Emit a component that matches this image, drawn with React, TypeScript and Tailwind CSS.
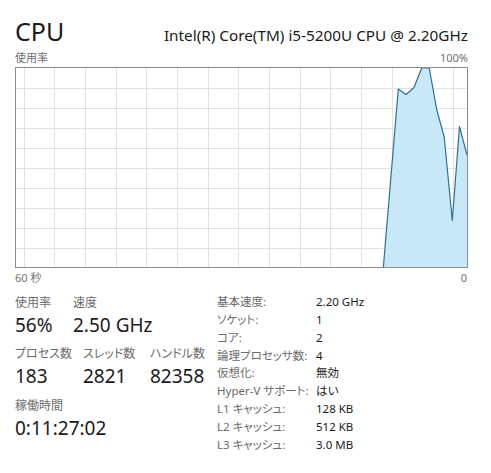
import React from "react";

const FONT = { fontFamily: '"Noto Sans", "Noto Sans CJK JP", sans-serif' };

const pts: [number, number][] = [
  [367.3, 200],
  [382.3, 21],
  [390, 26.5],
  [398, 19.5],
  [405.7, 0],
  [413.2, 0],
  [420.7, 41.5],
  [428.2, 69],
  [436.3, 152.5],
  [443.5, 58.7],
  [451, 87],
];

function Chart() {
  const hLines = [20, 40, 60, 80, 100, 120, 140, 160, 180];
  const vLines = Array.from({ length: 15 }, (_, k) => 7.5 + 30.67 * k);
  const line = pts.map((p) => p.join(",")).join(" ");
  const fill = line + " 451,200";
  return (
    <div className="w-[453px] h-[201px] border border-[#8c8c8c] bg-white">
      <svg width="451" height="199" viewBox="0 0 451 199" className="block">
        {hLines.map((y) => (
          <line key={"h" + y} x1="0" x2="451" y1={y + 0.5} y2={y + 0.5} stroke="#e2e2e2" strokeWidth="1" />
        ))}
        {vLines.map((x) => (
          <line key={"v" + x} y1="0" y2="199" x1={Math.round(x) + 0.5} x2={Math.round(x) + 0.5} stroke="#e2e2e2" strokeWidth="1" />
        ))}
        <polygon points={fill} fill="#c3e6f6" fillOpacity="0.9" />
        <polyline points={line} fill="none" stroke="#2b7195" strokeWidth="1.2" strokeLinejoin="round" />
      </svg>
    </div>
  );
}

function Stat({ label, value, w }: { label: string; value: string; w: string }) {
  return (
    <div className={"flex flex-col whitespace-nowrap " + w}>
      <div className="text-[12px] leading-[16px] text-[#6b6b6b] [font-feature-settings:'palt']">{label}</div>
      <div className="text-[19px] leading-[24px] text-[#1a1a1a] mt-[2px]">{value}</div>
    </div>
  );
}

const details: [string, string][] = [
  ["基本速度:", "2.20 GHz"],
  ["ソケット:", "1"],
  ["コア:", "2"],
  ["論理プロセッサ数:", "4"],
  ["仮想化:", "無効"],
  ["Hyper-V サポート:", "はい"],
  ["L1 キャッシュ:", "128 KB"],
  ["L2 キャッシュ:", "512 KB"],
  ["L3 キャッシュ:", "3.0 MB"],
];

export default function App() {
  return (
    <div className="w-[491px] h-[473px] bg-white overflow-hidden" style={FONT}>
      <div className="pl-[15px] pr-[23px] pt-[12px]">
        <div className="flex items-end justify-between h-[36px]">
          <div className="text-[25px] leading-[32px] text-[#1a1a1a] mb-[1px]">CPU</div>
          <div className="text-[15.3px] leading-[22px] text-[#1a1a1a] mb-[2px]">Intel(R) Core(TM) i5-5200U CPU @ 2.20GHz</div>
        </div>
        <div className="flex justify-between text-[11px] leading-[14px] text-[#707070] mt-[3px] h-[16px]">
          <span>使用率</span>
          <span>100%</span>
        </div>
        <Chart />
        <div className="flex justify-between text-[11px] leading-[14px] text-[#707070] mt-[3px]">
          <span>60 秒</span>
          <span className="mr-[1px]">0</span>
        </div>
        <div className="flex mt-[10px]">
          <div className="w-[202px] flex flex-col">
            <div className="flex">
              <Stat label="使用率" value="56%" w="w-[58px]" />
              <Stat label="速度" value="2.50 GHz" w="w-[90px]" />
            </div>
            <div className="flex mt-[9px]">
              <Stat label="プロセス数" value="183" w="w-[68px]" />
              <Stat label="スレッド数" value="2821" w="w-[67px]" />
              <Stat label="ハンドル数" value="82358" w="w-[67px]" />
            </div>
            <div className="flex mt-[10px]">
              <Stat label="稼働時間" value="0:11:27:02" w="w-[120px]" />
            </div>
          </div>
          <div className="flex flex-col -mt-[2px]">
            {details.map(([k, v]) => (
              <div key={k} className="flex h-[17.8px] items-center text-[11.5px] whitespace-nowrap">
                <span className="w-[99px] text-[#6b6b6b] [font-feature-settings:'palt']">{k}</span>
                <span className="text-[#1a1a1a]">{v}</span>
              </div>
            ))}
          </div>
        </div>
      </div>
    </div>
  );
}
